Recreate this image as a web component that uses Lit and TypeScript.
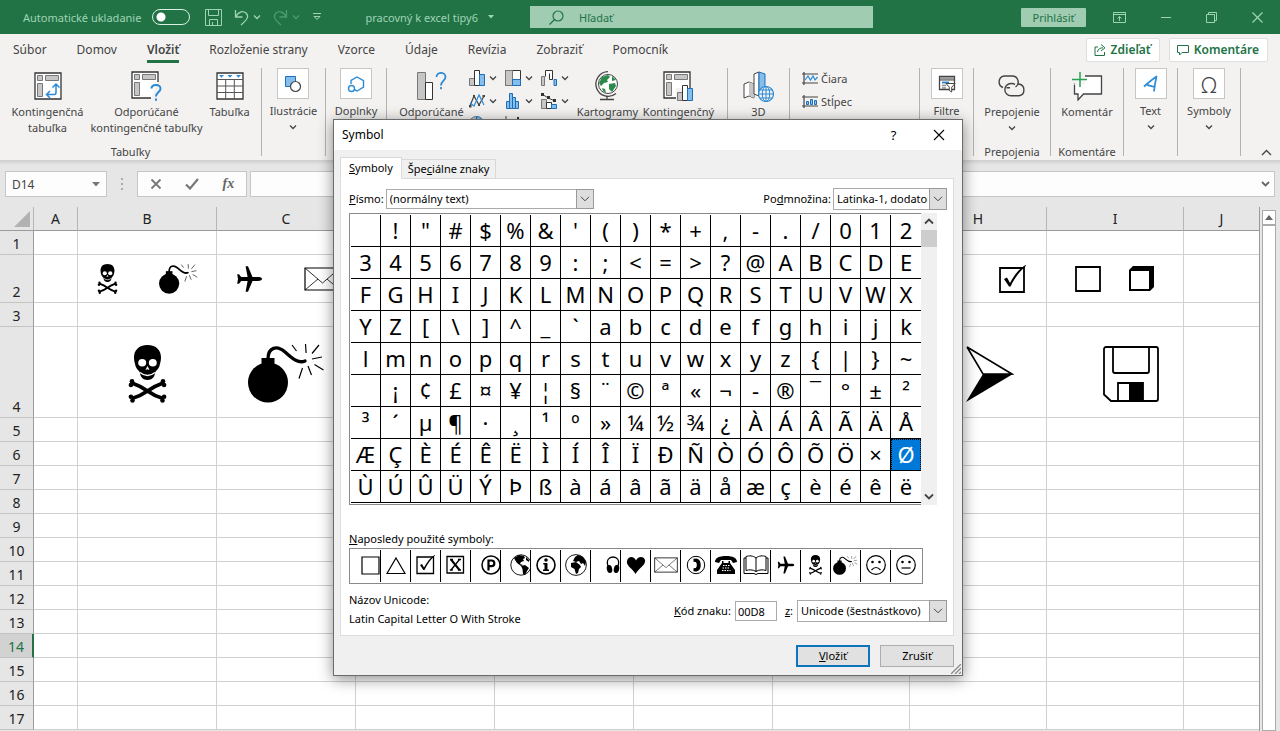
import { LitElement, html, svg, css, nothing } from "lit";
import { customElement, state } from "lit/decorators.js";
import { classMap } from "lit/directives/class-map.js";

const pic = (w: number, h: number, body: unknown, box = `0 0 ${w} ${h}`) =>
  html`<svg width=${w} height=${h} viewBox=${box} fill="none" aria-hidden="true">${body}</svg>`;

/* ---------- pictographs shared by the sheet and the dialog ---------- */

const skull = svg`
  <path fill="#000" d="M19 0C28 0 32.5 5.5 32.5 12.5C32.5 16 31.5 18.5 31 21C30 24 28 25.5 26.8 27L25.8 31C24 34 21.5 35 19 35S14 34 12.2 31L11.2 27C10 25.5 8 24 7 21C6.500 18.500 5.500 16 5.500 12.500C5.500 5.500 10 0 19 0Z"/>
  <ellipse cx="13.700" cy="17.800" rx="4" ry="3.800" fill="#fff"/><ellipse cx="24.300" cy="17.800" rx="4" ry="3.800" fill="#fff"/>
  <path fill="#fff" d="M19 21l2 4-2-.8-2 .8z"/>
  <path stroke="#fff" stroke-width="1.300" d="M11.500 27.500Q19 33.500 26.500 27.500"/>
  <g stroke="#000" stroke-width="3.800"><path d="M3.500 38Q12 41 19 46T34.500 53.500M34.500 38Q26 41 19 46T3.500 53.500"/></g>
  <g fill="#000"><circle cx="3.500" cy="36.200" r="2.300"/><circle cx="2.400" cy="40" r="2.300"/><circle cx="34.500" cy="36.200" r="2.300"/><circle cx="35.600" cy="40" r="2.300"/>
  <circle cx="2.400" cy="51.800" r="2.300"/><circle cx="4" cy="55.500" r="2.300"/><circle cx="35.600" cy="51.800" r="2.300"/><circle cx="34" cy="55.500" r="2.300"/></g>`;

const bomb = svg`
  <circle cx="20" cy="38.500" r="20" fill="#000"/><path fill="#000" d="M13.500 14h13v8h-13z"/>
  <path stroke="#000" stroke-width="3.400" stroke-linecap="round" d="M20 15C20 3 29 1 37 8C44 14 50 20 57 17"/>
  <path stroke="#000" stroke-width="1.200" d="M44 1l4.500 6M57.500 0l.6 9M71 1l-7 8.500M74 13l-10 2M75.500 26l-9-5.500M63.500 31l-3.500-9M51 34.500l3.500-10.500"/>`;

const plane = svg`<path fill="#000" d="M26 13c0 1.300-2 1.900-4 1.900h-5.500l-4.500 10.800H9.600l2-10.800H5.200L3 17.800H1.200L2 13 1.200 8.200H3l2.200 2.900h6.400l-2-10.800H12l4.500 10.800H22c2 0 4 .600 4 1.900z"/>`;
const mail = svg`<path stroke="#000" stroke-width="1.200" d="M1 1h35v22H1z"/><path stroke="#000" stroke-width=".8" d="M1 1l17.500 15L36 1M1 23l13-11M36 23L23 12"/>`;
const tickBox = svg`<path stroke="#000" stroke-width="1.800" d="M1 3h24v24H1z"/><path fill="#000" d="M5 14l3-1.500 3 5.500C15 10 20 4 26.500 0l.5.800C20 7 15 14 11.600 21.500H10z"/>`;
const openBox = svg`<path stroke="#000" stroke-width="1.800" d="M1 1h24v24H1z"/>`;
const cube = svg`<path fill="#000" d="M0 4L4 0h21v21l-4 4H0z"/><path fill="#fff" d="M2 5h18v18H2z"/>`;
const arrowHead = svg`<path stroke="#000" stroke-width="1.600" d="M1 1l45 27L17 28z"/><path fill="#000" d="M17 28h30L0 56z"/>`;
const floppy = svg`<path stroke="#000" stroke-width="1.800" d="M3 1h50a2 2 0 0 1 2 2v50a2 2 0 0 1-2 2H8L1 48.500V3a2 2 0 0 1 2-2z"/><path stroke="#000" stroke-width="1.800" d="M10 1v24a2 2 0 0 0 2 2h32a2 2 0 0 0 2-2V1M15 55V37h25v18"/><path fill="#000" d="M26 37h14v18H26z"/>`;

const face = (mouth: string) => svg`<circle cx="11" cy="11" r="9.300" stroke="#000" stroke-width="1.200"/><circle cx="7.500" cy="8" r="1.300" fill="#000"/><circle cx="14.500" cy="8" r="1.300" fill="#000"/><path stroke="#000" stroke-width="1.200" d=${mouth}/>`;

const recent = [
  { name: "White Square", at: "end", art: pic(19, 19, svg`<path stroke="#000" stroke-width="1.200" d="M1 1h17v17H1z"/>`) },
  { name: "Triangle", at: "", art: pic(20, 20, svg`<path stroke="#000" stroke-width="1.200" d="M10 3l9 15.500H1z"/>`) },
  { name: "Checked Box", at: "", art: pic(19, 20, svg`<path stroke="#000" stroke-width="1.300" d="M1 2h16.500v16.500H1z"/><path fill="#000" d="M4 10l2-1 2 3.500C11 7 14 3 18.500 0l.5.600C14 5 11 10 8.500 15H7.300z"/>`) },
  { name: "X Box", at: "", art: pic(19, 20, svg`<path stroke="#000" stroke-width="1.300" d="M1 1.500h16.500V18H1z"/><path stroke="#000" stroke-width="2" d="M5 4.500l8.500 10.500"/><path stroke="#000" stroke-width="1.300" d="M13.500 4.500L5 15M3.800 15h3M12 15h3M4 4.500h3M12 4.500h3"/>`) },
  { name: "Sound Recording Copyright", at: "end", art: pic(19, 20, svg`<circle cx="10" cy="10" r="9" stroke="#000" stroke-width="1.500"/><path stroke="#000" stroke-width="2.200" d="M7.500 15.500V5.500h3a2.800 2.800 0 0 1 0 5.700h-3"/>`) },
  { name: "Globe Americas", at: "end", art: pic(20, 22, svg`<circle cx="11" cy="11" r="10.200" stroke="#000" stroke-width=".9"/><path fill="#000" d="M4 4l5-3 5 1 1 2-2 1 1 2-3 1-1 2 3 1-2 1-4-3-2-3zM11 12l4-1 4 3-2 3-2 4-2-1-.5-5zM16 3l3 3v2l-3-2z"/>`) },
  { name: "Circled Information", at: "", art: pic(20, 20, svg`<circle cx="10" cy="10" r="9" stroke="#000" stroke-width="1.600"/><circle cx="10" cy="5" r="1.800" fill="#000"/><path stroke="#000" stroke-width="3" d="M10 8.300V15"/><path stroke="#000" stroke-width="1.400" d="M7.300 8.700H11M7 15.300h6"/>`) },
  { name: "Globe Africa", at: "", art: pic(24, 22, svg`<circle cx="12" cy="11" r="10.400" stroke="#000" stroke-width=".9"/><path fill="#000" d="M11 3l3-2 5 2 3 5-1 4-2-3-2 1-2-3-3 1-3-1zM7 9l5-1 4 3 1 2-2 2-1 4-2 1-1.500-5-3.500-2z"/>`) },
  { name: "Headphones", at: "end", art: pic(15, 18, svg`<path stroke="#000" stroke-width="1.300" d="M3 10C1 4 4 1 8 1s7 3 5 9"/><ellipse cx="4.500" cy="13" rx="2.700" ry="4" fill="#000" transform="rotate(-12 4.500 13)"/><ellipse cx="11.500" cy="13" rx="2.700" ry="4" fill="#000" transform="rotate(12 11.500 13)"/>`) },
  { name: "Heart", at: "", art: pic(20, 18, svg`<path fill="#000" d="M9.500 18C6 12 0 10 1 5 2-.500 8.500 0 10 4.500 12 0 18 0 19 4c1 5-6 8-9.500 14z"/>`) },
  { name: "Envelope", at: "", art: pic(24, 18, mail, "0 0 37 24") },
  { name: "Telephone Location", at: "", art: pic(20, 20, svg`<circle cx="10" cy="10" r="8.700" stroke="#000"/><path fill="#000" d="M7.500 3.800l3-.3c3.500 1 4.200 3.500 4.200 6.500s-.7 5.500-4.200 6.500l-3-.3v-3l2.300-.2c1.400-1.500 1.400-4.500 0-6l-2.300-.2z"/>`) },
  { name: "Black Telephone", at: "", art: pic(22, 18, svg`<path fill="#000" d="M0 6C0 2 4 0 11 0s11 2 11 6l-4 1-2-3H6L4 7zM7 5h1.500v2h5V5H15v2l5 7v4H2v-4l5-7z"/><path stroke="#fff" stroke-width="1" stroke-dasharray="1.500 1" d="M8 9.500h6.500M7.500 12h7.500M7 14.500h8.500"/>`) },
  { name: "Open Book", at: "", art: pic(26, 20, svg`<path stroke="#000" d="M13 3C10 .500 6 .500 3 1.500v14c3-1 7-1 10 1 3-2 7-2 10-1v-14c-3-1-7-1-10 1.500zM13 3v14M3 3H1v15.500h10l2 1 2-1h10V3h-2"/>`) },
  { name: "Airplane", at: "", art: pic(18, 18, plane, "0 0 27 26") },
  { name: "Skull and Crossbones", at: "", art: pic(13, 20, skull, "0 0 38 58") },
  { name: "Bomb", at: "", art: pic(25, 19, bomb, "0 0 77 59") },
  { name: "Frowning Face", at: "", art: pic(22, 22, face("M6.500 16q4.500-5 9 0")) },
  { name: "Neutral Face", at: "", art: pic(22, 22, face("M6.500 14h9")) },
];

const chevron = (color = "#444") => pic(8, 6, svg`<path stroke=${color} stroke-width="1.300" d="M1 1.500l3 3 3-3"/>`);

/* ---------- worksheet ---------- */

const columns = ["A", "B", "C", "D", "E", "F", "G", "H", "I", "J"];
/* the open dialog lies over these headers */
const covered = new Set(["D", "E", "F", "G"]);
const tall: Record<number, string> = { 2: "medium", 4: "large" };
const cells: Record<string, { kind: string; items: unknown[] }> = {
  B2: { kind: "pair", items: [pic(21, 30, skull, "0 0 38 58"), pic(39, 30, bomb, "0 0 77 59")] },
  C2: { kind: "pair", items: [pic(27, 26, plane), pic(37, 24, mail)] },
  H2: { kind: "right", items: [pic(27, 28, tickBox)] },
  I2: { kind: "boxes", items: [pic(26, 26, openBox), pic(25, 25, cube)] },
  B4: { kind: "middle", items: [pic(39, 58, skull, "0 0 38 58")] },
  C4: { kind: "middle", items: [pic(77, 59, bomb)] },
  H4: { kind: "arrow", items: [pic(48, 56, arrowHead)] },
  I4: { kind: "far", items: [pic(56, 56, floppy)] },
};

@customElement("work-sheet")
class WorkSheet extends LitElement {
  static styles = css`
    :host { display: flex; flex: 1; min-height: 0; overflow: hidden; background: #e6e6e6; }
    .sheet { flex: 1; min-width: 0; border-collapse: separate; border-spacing: 0; table-layout: fixed; width: 100%; font-size: 14px; color: #222; }
    .holder { flex: 1; min-width: 0; border-right: 1px solid #9b9b9b; }
    .c-num { width: 34px; } .c-a { width: 44px; } .c-w { width: 139px; } .c-h { width: 137px; }
    th, td { padding: 0; font-weight: 400; box-sizing: border-box; line-height: 20px; }
    thead th { height: 24px; background: #e6e6e6; border-right: 1px solid #b5b5b5; border-bottom: 1px solid #9b9b9b; }
    thead th:last-child { border-right: 0; }
    tbody th { height: 24px; background: #e6e6e6; border-right: 1px solid #9b9b9b; border-bottom: 1px solid #c3c3c3; vertical-align: bottom; }
    .medium th { height: 48px; } .large th { height: 91px; }
    td { background: #fff; border-right: 1px solid #d0d0d0; border-bottom: 1px solid #d0d0d0; }
    td:last-child { border-right: 0; }
    tbody .here { background: #d2d2d2; color: #217346; border-right: 2px solid #217346; }
    .corner svg { display: block; margin: 0 3px 0 auto; }
    .cell { display: flex; align-items: center; }
    .cell svg { flex: none; }
    .pair { padding-left: 19px; gap: 41px; }
    .boxes { padding-left: 28px; gap: 28px; }
    .middle { justify-content: center; padding-top: 3px; }
    .right { justify-content: flex-end; padding-right: 20px; }
    .far, .arrow { justify-content: flex-end; padding: 3px 24px 0 0; }
    .arrow { padding-right: 32px; }
    .bar { width: 14px; margin: 3px 4px 0 2px; display: flex; flex-direction: column; }
    .up { height: 16px; padding: 0; border: 1px solid #ababab; border-bottom-width: 2px; background: #fff; display: grid; place-items: center; }
    .track { flex: 1; background: #fff; border: 1px solid #ababab; border-top: 0; }
  `;
  render() {
    return html`
      <div class="holder"><table class="sheet">
        <colgroup><col class="c-num"><col class="c-a"><col class="c-w"><col class="c-w"><col class="c-w"><col class="c-w"><col class="c-w"><col class="c-h"><col class="c-h"><col class="c-h"><col></colgroup>
        <thead><tr><th class="corner">${pic(16, 16, svg`<path fill="#b2b2b2" d="M16 0v16H0z"/>`)}</th>${columns.map((c) => html`<th scope="col">${covered.has(c) ? nothing : c}</th>`)}</tr></thead>
        <tbody>${Array.from({ length: 17 }, (_, i) => i + 1).map((n) => html`
          <tr class=${tall[n] ?? ""}><th scope="row" class=${n === 14 ? "here" : ""}>${n}</th>${columns.map((c) => {
            const cell = cells[c + n];
            return html`<td>${cell ? html`<div class="cell ${cell.kind}">${cell.items}</div>` : nothing}</td>`;
          })}</tr>`)}</tbody>
      </table></div>
      <div class="bar"><button class="up" aria-label="Posunúť nahor">${pic(8, 5, svg`<path fill="#666" d="M4 0l4 5H0z"/>`)}</button><div class="track"></div></div>`;
  }
}

/* ---------- symbol dialog ---------- */

const codes = [...Array.from({ length: 95 }, (_, i) => 0x20 + i), ...Array.from({ length: 76 }, (_, i) => 0xa0 + i)];
const arrowDown = pic(10, 6, svg`<path stroke="#444" d="M1 .800l4 4 4-4"/>`);

@customElement("symbol-dialog")
class SymbolDialog extends LitElement {
  @state() selected = 0xd8;
  static styles = css`
    :host { display: block; box-sizing: border-box; width: 630px; background: #f0f0f0; border: 1px solid #6b6b6b; box-shadow: 0 3px 14px rgba(0, 0, 0, 0.45); font-size: 11px; line-height: 16px; color: #000; }
    * { box-sizing: border-box; }
    button, input, select { font: inherit; color: inherit; }
    .title { display: flex; align-items: center; height: 30px; padding: 0 1px 0 8px; background: #fff; font-size: 12px; }
    .title h1 { flex: 1; margin: 0; font: inherit; }
    .title button { width: 45px; height: 28px; padding: 0; border: 0; background: none; display: grid; place-items: center; font-size: 13px; }
    .body { padding: 7px 8px 8px 6px; }
    .tabs { display: flex; align-items: flex-end; position: relative; margin-bottom: -1px; }
    .tabs button { height: 20px; padding: 0 6px; border: 1px solid #d9d9d9; border-left: 0; background: #f0f0f0; }
    .tabs .on { height: 22px; padding: 0 8px; background: #fff; border-left: 1px solid #d9d9d9; border-bottom-color: #fff; }
    .panel { background: #fff; border: 1px solid #dcdcdc; padding: 9px 6px 5px 8px; }
    .row { display: flex; align-items: center; }
    .font-row { height: 22px; margin-bottom: 3px; gap: 2px; }
    .grow { flex: 1; }
    .drop { position: relative; display: flex; height: 22px; }
    .drop select { appearance: none; width: 100%; border: 1px solid #ababab; border-radius: 0; background: #fff; padding: 0 18px 0 3px; outline: 0; }
    .drop span { position: absolute; right: 0; top: 0; bottom: 0; width: 18px; display: grid; place-items: center; background: #dedede; border: 1px solid #9a9a9a; pointer-events: none; }
    .font { width: 208px; height: 20px; } .subset { width: 114px; } .from { width: 150px; }
    .chart { display: flex; }
    .glyphs { display: grid; grid-template-columns: repeat(19, 30px); grid-auto-rows: 32px; padding: 1px 0 1px 1px; border: 1px solid #8a8a8a; border-right: 0; }
    .glyphs button, .recent button { padding: 0; border: 0; border-right: 1px solid #000; background: none; display: grid; place-items: center; overflow: hidden; }
    .glyphs button { border-bottom: 1px solid #000; font-size: 22px; line-height: 28px; padding-bottom: 2px; }
    .glyphs button:nth-child(19n) { border-right: 0; }
    .glyphs .sel { background: #0078d7; color: #fff; outline: 1px dotted #000; outline-offset: -1px; }
    .bar { width: 16px; background: #f0f0f0; display: flex; flex-direction: column; align-items: center; justify-content: space-between; padding: 5px 0; }
    .upper { display: flex; flex-direction: column; align-items: center; gap: 5px; align-self: stretch; }
    .thumb { height: 17px; align-self: stretch; background: #cdcdcd; }
    .caption { margin-top: 26px; }
    .recent { display: inline-grid; grid-template-columns: repeat(19, 30px); height: 36px; margin-top: 1px; padding: 1px; border: 1px solid #8a8a8a; vertical-align: top; }
    .recent button { padding-bottom: 2px; }
    .recent .end { justify-items: end; }
    .recent button:last-child { border-right: 0; }
    .info { display: flex; justify-content: space-between; margin-top: 8px; }
    .info p { margin: 0 0 3px; }
    .code { gap: 4px; align-self: center; height: 22px; }
    .code input { width: 42px; height: 20px; border: 1px solid #ababab; padding: 0 2px; outline: 0; margin-right: 4px; }
    .foot { display: flex; justify-content: flex-end; gap: 10px; margin-top: 9px; }
    .foot button { width: 74px; height: 22px; padding: 0; border: 1px solid #adadad; background: #e1e1e1; }
    .foot .ok { border: 2px solid #0f74c0; }
    .grip { position: absolute; right: 1px; bottom: 1px; display: block; }
    .grip svg { display: block; }
  `;
  drop(id: string, cls: string, text: string) {
    return html`<div class="drop ${cls}"><select id=${id}><option>${text}</option></select><span>${arrowDown}</span></div>`;
  }
  render() {
    return html`
      <div class="title"><h1>Symbol</h1>
        <button aria-label="Pomocník">?</button>
        <button aria-label="Zavrieť">${pic(12, 12, svg`<path stroke="#000" stroke-width="1.100" d="M1 1l10 10M11 1L1 11"/>`)}</button></div>
      <div class="body">
        <div class="tabs" role="tablist"><button role="tab" aria-selected="true" class="on"><u>S</u>ymboly</button><button role="tab" aria-selected="false">Špe<u>c</u>iálne znaky</button></div>
        <div class="panel">
          <div class="row font-row"><label for="font"><u>P</u>ísmo:</label>${this.drop("font", "font", "(normálny text)")}<span class="grow"></span><label for="subset">Po<u>d</u>množina:</label>${this.drop("subset", "subset", "Latinka-1, dodatok")}</div>
          <div class="chart">
            <div class="glyphs">${codes.map((c) => html`<button class=${classMap({ sel: c === this.selected })} @click=${() => (this.selected = c)}>${c === 0xad ? "-" : String.fromCharCode(c)}</button>`)}</div>
            <div class="bar"><div class="upper">${pic(10, 7, svg`<path stroke="#444" stroke-width="1.800" d="M1 5.500l4-4 4 4"/>`)}<div class="thumb"></div></div>${pic(10, 7, svg`<path stroke="#444" stroke-width="1.800" d="M1 1.500l4 4 4-4"/>`)}</div>
          </div>
          <div class="caption"><u>N</u>aposledy použité symboly:</div>
          <div class="recent">${recent.map((r) => html`<button class=${r.at} aria-label=${r.name}>${r.art}</button>`)}</div>
          <div class="info">
            <div><p>Názov Unicode:</p><p>Latin Capital Letter O With Stroke</p></div>
            <div class="row code"><label for="code"><u>K</u>ód znaku:</label><input id="code" value="00D8"><label for="from"><u>z</u>:</label>${this.drop("from", "from", "Unicode (šestnástkovo)")}</div>
          </div>
        </div>
        <div class="foot"><button class="ok"><u>V</u>ložiť</button><button>Zrušiť</button></div>
      </div>
      <span class="grip">${pic(10, 10, svg`<path stroke="#8a8a8a" stroke-width="1.300" d="M0 10L10 0M4 10l6-6M8 10l2-2"/>`)}</span>`;
  }
}

/* ---------- ribbon artwork ---------- */

const frame = svg`<path fill="#fff" stroke="#333" stroke-width="1.300" d="M1 1h26v26H1z"/><path fill="#c6c6c6" stroke="#777" d="M3.500 3.500h5v5h-5zM11.500 3.500h13v5h-13zM3.500 11.500h5v13h-5z"/>`;
const art = {
  pivot: pic(28, 28, svg`${frame}<path stroke="#2b8ad6" stroke-width="1.500" d="M22 12v8.500a2 2 0 0 1-2 2h-7M18.500 15.500L22 12l3.500 3.500M16 19l-3.500 3.500L16 26"/>`),
  pivotAsk: pic(31, 30, svg`<path fill="#fff" stroke="#333" stroke-width="1.300" d="M27 11V1H1v26h19"/><path fill="#c6c6c6" stroke="#777" d="M3.500 3.500h5v5h-5zM11.500 3.500h13v5h-13zM3.500 11.500h5v13h-5z"/><path stroke="#2b8ad6" stroke-width="2" d="M20.500 17.500c0-4.500 9-5 9 0 0 4-4.500 3.500-4.500 8M25 27.500v2.300"/>`),
  table: pic(28, 28, svg`<path fill="#fff" stroke="#333" stroke-width="1.300" d="M1 1h26v26H1z"/><path stroke="#555" d="M1 7.500h26M1 14h26M1 20.500h26M9.700 7v20M18.300 7v20"/><path fill="#2b8ad6" d="M3 3h5l-2.500 2.800zM11.500 3h5L14 5.800zM20 3h5l-2.500 2.800z"/>`),
  shapes: pic(18, 18, svg`<path fill="#83beec" stroke="#1f6fb8" d="M1.500 1.500h10v10h-10z"/><circle cx="11.500" cy="11.500" r="5" fill="#fff" stroke="#444" stroke-width="1.200"/>`),
  addins: pic(18, 18, svg`<path stroke="#2b8ad6" stroke-width="1.400" d="M4 9V5.500L10 2l6.500 3.700v6.500L10 16l-3-1.500"/><circle cx="4.500" cy="13.500" r="3" stroke="#2b8ad6" stroke-width="1.400"/>`),
  chartAsk: pic(31, 28, svg`<path fill="#c6c6c6" stroke="#777" d="M1.500.500h8v27h-8z"/><path fill="#fff" stroke="#333" d="M9.500 10.500h7v17h-7z"/><path stroke="#2b8ad6" stroke-width="1.800" d="M20.500 5c0-5.500 9-5.500 9 0 0 4-4.500 4-4.500 8.500M25 15v2.200"/>`),
  globe: pic(28, 30, svg`<circle cx="14" cy="13" r="9.500" fill="#fff" stroke="#444"/><path fill="#2a8a4a" d="M8 6l6-2 2 2-3 3 1 2-4 1-3 3-2-3zM15 13l6-1 1 3-4 6-3-3zM18 5l4 4-4 1zM8 17l3 1 1 4-3-2z"/><path stroke="#444" stroke-width="1.300" d="M14 .700A12.300 12.300 0 1 0 22 22.500M13 25.500V28M6 28.500h14"/>`),
  pivotChart: pic(31, 31, svg`${frame}<path fill="#f3f2f1" d="M13 17h18v14H13z"/><path fill="#c6c6c6" stroke="#777" d="M14.500 21.500h5v8h-5z"/><path fill="#fff" stroke="#333" d="M19.500 14.500h5v15h-5z"/><path fill="#83beec" stroke="#1f6fb8" d="M24.500 17.500h5v12h-5z"/>`),
  map3d: pic(31, 31, svg`<path fill="#fff" stroke="#444" d="M1 13l5-2 5 2v14l-5-2-5 2z"/><path fill="#c6c6c6" d="M6 11l5 2v14l-5-2z"/><path fill="#fff" stroke="#444" d="M11 3l5-2v24l-5-2z"/><path fill="#83beec" stroke="#1f6fb8" d="M16 1l6 2v20l-6 2z"/><circle cx="23" cy="23" r="7.500" fill="#f3f2f1" stroke="#2b8ad6" stroke-width="1.200"/><path stroke="#2b8ad6" d="M15.500 23h15M17 19h12M17 27h12M23 15.500v15"/><ellipse cx="23" cy="23" rx="3.700" ry="7.500" stroke="#2b8ad6"/>`),
  filter: pic(18, 18, svg`<path fill="#fff" stroke="#444" stroke-width="1.300" d="M1.500 1.500h15v13h-15z"/><path fill="#9a9a9a" d="M2 2h14v2.500H2z"/><path stroke="#444" d="M2 5h14"/><path stroke="#1f7fd0" stroke-width="1.800" d="M4 7.500h7"/><path stroke="#888" stroke-width="1.500" d="M4 10.500h4M4 13h4"/><path fill="#fff" stroke="#444" d="M8 8.500h9l-3.300 3.700V17l-2.400-1.500v-3.300z"/>`),
  link: pic(29, 22, svg`<g stroke="#444" stroke-width="1.400"><path d="M6 12.500A6 6 0 0 1 7 1h8a6 6 0 0 1 3.500 11"/><path d="M18 9.500A5 5 0 0 0 15 8.500h-1a6 6 0 0 0 0 12.300h8A6 6 0 0 0 22 9h-1.500M9.500 12.800H13"/></g>`),
  comment: pic(31, 29, svg`<path fill="#fff" stroke="#444" stroke-width="1.300" d="M13 4h16.500v18H11.500L6 28v-6H2.500V11"/><path fill="#f3f2f1" d="M0 2h13v11H0z" opacity=".6"/><path stroke="#2aa053" stroke-width="1.500" d="M8 0v15M0 7.500h15"/>`),
  letter: pic(16, 18, svg`<path stroke="#2b8ad6" stroke-width="1.700" stroke-linejoin="round" d="M1 11.500C5 8 9 4.500 13.500 1.500 12.500 6 11.500 11 11 16.500M3 9c3 2.500 6 2 9.500 3"/>`),
  column: pic(16, 16, svg`<path fill="#c6c6c6" stroke="#777" d="M.500 8.500h5v7h-5z"/><path fill="#fff" stroke="#333" d="M5.500.500h5v15h-5z"/><path fill="#83beec" stroke="#1f6fb8" d="M10.500 4.500h5v11h-5z"/>`),
  tree: pic(16, 16, svg`<path fill="#fff" stroke="#333" d="M.500.500h15v15H.500z"/><path fill="#c6c6c6" stroke="#777" d="M.500.500h7v15h-7z"/><path fill="#83beec" stroke="#1f6fb8" d="M7.500 9.500h8v6h-8z"/>`),
  falls: pic(16, 16, svg`<path fill="#c6c6c6" stroke="#777" d="M.500 15.500v-9h3v9z"/><path fill="#fff" stroke="#333" d="M4.500 6.500v-6h7v9h-3v-6"/><path fill="#83beec" stroke="#1f6fb8" d="M13 9.500h2.500v6H13z"/>`),
  line: pic(16, 16, svg`<path stroke="#444" stroke-width="1.200" d="M1 13L5 3l5 9 5-9"/><path stroke="#2b8ad6" stroke-width="1.200" d="M1 10l4 3 5-11 5 10"/><path fill="#444" d="M0 12h2.500v2.500H0zM4 2h2v2H4zM9 11h2v2H9zM13.500 2H16v2h-2.500z"/>`),
  bars: pic(16, 16, svg`<path fill="#83beec" stroke="#1f6fb8" d="M1.500 8.500h3v7h-3zM4.500.500h3v15h-3zM7.500 4.500h3v11h-3zM10.500 8.500h3v7h-3z"/>`),
  combo: pic(16, 16, svg`<path fill="#c6c6c6" stroke="#777" d="M.500 6.500h5v9h-5z"/><path fill="#fff" stroke="#333" d="M5.500 9.500h5v6h-5z"/><path fill="#83beec" stroke="#1f6fb8" d="M10.500 11.500h5v4h-5z"/><path stroke="#444" d="M1 1l6 4 7 3"/><path fill="#333" d="M0 0h3v3H0zM6 3h3v3H6zM12 6h3v3h-3z"/>`),
  pie: pic(16, 16, svg`<path fill="#c6c6c6" stroke="#777" d="M7.500.500a7 7 0 1 0 0 15z"/><path fill="#83beec" stroke="#1f6fb8" d="M7.500.500a7 7 0 0 1 0 15z"/>`),
  scatter: pic(16, 16, svg`<path stroke="#444" d="M1 0v15h15"/><path fill="#333" d="M12 1h2v2h-2zM6 5h2v2H6z"/>`),
  sparkLine: pic(17, 16, svg`<path stroke="#444" stroke-width="1.200" d="M2 1v13M0 3h16M0 12h16"/><path stroke="#2b8ad6" stroke-width="1.200" d="M3 9l3-4 2.500 4L11 5l2 4 2.500-3"/>`),
  sparkCol: pic(17, 16, svg`<path stroke="#444" stroke-width="1.200" d="M2 1v13M0 3h16M0 12h16"/><path fill="#83beec" stroke="#1f6fb8" d="M4.500 7.500h2v3h-2zM8.500 5.500h2v5h-2zM12.500 6.500h2v4h-2z"/>`),
};

const share = pic(12, 12, svg`<path stroke="#217346" d="M4 3H1v8.500h9.500V8M3.500 8C4 5 6 3.800 9 3.800M7 .500l4 3.300L7 7"/>`);
const talk = pic(12, 12, svg`<path stroke="#217346" d="M.500 1.500h11v7H5L2.500 11V8.500h-2z"/>`);

const tabNames = ["Súbor", "Domov", "Vložiť", "Rozloženie strany", "Vzorce", "Údaje", "Revízia", "Zobraziť", "Pomocník"];

@customElement("app-root")
class AppRoot extends LitElement {
  static styles = css`
    :host { display: flex; flex-direction: column; height: 100vh; min-width: 1000px; position: relative; overflow: hidden; font-family: "Noto Sans", "Open Sans", sans-serif; color: #444; background: #e6e6e6; }
    * { box-sizing: border-box; }
    button, input { font: inherit; color: inherit; border: 0; padding: 0; background: none; }
    svg { display: block; flex: none; }
    .top { flex: none; display: flex; align-items: center; height: 34px; background: #217346; color: #9fd3b5; font-size: 11px; padding-right: 17px; }
    .quick { flex: none; width: 530px; display: flex; align-items: center; padding-left: 23px; }
    .toggle { appearance: none; margin: 0 15px 0 11px; width: 38px; height: 16px; border: 1px solid #d9f0e2; border-radius: 8px; background: radial-gradient(circle at 8px 7px, #fff 4px, transparent 5px); }
    .undo { display: flex; align-items: center; gap: 4px; margin-left: 12px; }
    .more { margin-left: 13px; }
    .file { display: flex; align-items: center; gap: 10px; margin-left: 44px; }
    .find { flex: 0 1 343px; display: flex; align-items: center; height: 22px; background: #a0ccb2; padding-left: 19px; gap: 15px; color: #217346; }
    .find input { flex: 1; min-width: 0; outline: 0; }
    .find input::placeholder { color: #217346; opacity: 1; }
    .win { margin-left: auto; display: flex; align-items: center; gap: 35px; }
    .sign { height: 19px; width: 65px; background: #a0ccb2; color: #217346; border-radius: 1px; margin-right: -8px; }
    .tabs { flex: none; display: flex; align-items: center; height: 31px; padding: 0 12px 0 13px; background: #f3f2f1; font-size: 12px; gap: 30px; }
    .tabs .tab { height: 27px; padding-top: 2px; border-bottom: 3px solid transparent; white-space: nowrap; }
    .tabs .on { font-weight: 600; border-color: #217346; }
    .acts { margin-left: auto; display: flex; gap: 9px; color: #217346; font-weight: 600; }
    .acts button { height: 24px; display: flex; align-items: center; gap: 5px; padding: 0 8px 0 7px; background: #fff; border: 1px solid #e1dfdd; border-radius: 2px; }
    .ribbon { flex: none; display: flex; height: 95px; padding: 3px 6px 4px 0; background: #f3f2f1; font-size: 11px; line-height: 16px; white-space: nowrap; }
    .group { flex: none; display: flex; flex-direction: column; border-right: 1px solid #b5b3b1; text-align: center; }
    .tools { flex: 1; display: flex; justify-content: center; }
    .caption { height: 14px; line-height: 14px; margin-bottom: -3px; }
    .big { display: flex; flex-direction: column; align-items: center; gap: 5px; overflow: visible; }
    .big .pict { height: 31px; display: flex; align-items: center; padding-top: 5px; }
    .big .text { display: flex; flex-direction: column; align-items: center; }
    .big .text svg { margin-top: 5px; }
    .boxed { gap: 4px; }
    .boxed .pict { width: 32px; justify-content: center; padding: 0; background: #fff; border: 1px solid #c8c6c4; }
    .omega { font-size: 22px; font-weight: 300; }
    .g1 { width: 262px; } .g2 { width: 64px; } .g3 { width: 61px; } .g4 { width: 341px; } .g5 { width: 62px; } .g6 { width: 130px; }
    .g7 { width: 54px; } .g8 { width: 77px; } .g9 { width: 73px; } .g10 { width: 54px; } .g11 { width: 63px; }
    .w48 { width: 48px; } .w62 { width: 62px; } .w72 { width: 72px; } .w80 { width: 80px; } .w118 { width: 118px; }
    .charts { display: grid; grid-template-columns: repeat(3, 36px); grid-auto-rows: 16px; row-gap: 7px; padding: 2px 0 0 1px; height: 50px; }
    .charts button { display: flex; align-items: center; gap: 4px; }
    .sparks { flex: 1; display: flex; flex-direction: column; gap: 7px; padding: 3px 0 0 12px; }
    .sparks button { display: flex; align-items: center; gap: 2px; height: 16px; }
    .fold { margin: auto 0 0 auto; padding: 0 2px 0 0; }
    .formula { flex: none; display: flex; align-items: center; height: 47px; padding: 1px 5px 0; background: linear-gradient(#cfcfcf, #e6e6e6 5px); font-size: 12px; }
    .formula > * { height: 26px; background: #fdfdfd; border: 1px solid #c6c6c6; }
    .name { width: 102px; display: flex; align-items: center; padding: 0 6px; }
    .name input { flex: 1; min-width: 0; outline: 0; }
    .formula .dots { width: 30px; border: 0; background: none; display: grid; place-items: center; }
    .fx { width: 110px; display: flex; align-items: center; justify-content: space-around; }
    .fx .fn { font: italic 700 14px "Liberation Serif", serif; color: #666; }
    .entry { flex: 1; min-width: 0; margin-left: 3px; display: flex; align-items: center; padding-right: 4px; }
    .entry input { flex: 1; min-width: 0; outline: 0; }
    symbol-dialog { position: absolute; top: 119px; left: calc(50% - 307px); }
  `;

  big(pict: unknown, lines: string[], cls = "", drop = false) {
    return html`<button class="big ${cls}"><span class="pict">${pict}</span><span class="text">${lines.map((l) => html`<span>${l}</span>`)}${drop ? chevron() : nothing}</span></button>`;
  }
  group(cls: string, body: unknown, caption = "") {
    return html`<div class="group ${cls}"><div class="tools">${body}</div>${caption ? html`<div class="caption">${caption}</div>` : nothing}</div>`;
  }

  render() {
    const pale = "#9fd3b5";
    const dim = "#4f9a70";
    return html`
      <header class="top">
        <div class="quick">
          <label for="auto">Automatické ukladanie</label><input id="auto" class="toggle" type="checkbox">
          <button aria-label="Uložiť">${pic(17, 17, svg`<path stroke=${pale} d="M.500.500h16v16H.500zM3.500.500v6h10v-6M4.500 16.500v-6h8v6M7.500 13v3"/>`)}</button>
          <div class="undo"><button aria-label="Späť">${pic(15, 17, svg`<path stroke=${pale} stroke-width="1.300" d="M1.500 1v7h7M1.500 8C5 2 9 1.500 12 4c3 3 2 6-5 12"/>`)}</button>${chevron(pale)}</div>
          <div class="undo"><button aria-label="Znova">${pic(15, 17, svg`<path stroke=${dim} stroke-width="1.300" d="M13.500 1v7h-7M13.500 8C10 2 6 1.500 3 4c-3 3-2 6 5 12"/>`)}</button>${chevron(dim)}</div>
          <button class="more" aria-label="Prispôsobiť">${pic(8, 8, svg`<path stroke=${pale} d="M0 .500h8M1 3.500l3 3 3-3z"/>`)}</button>
          <div class="file">pracovný k excel tipy6 ${pic(6, 4, svg`<path fill=${pale} d="M0 0h6L3 3.500z"/>`)}</div>
        </div>
        <div class="find">${pic(15, 15, svg`<circle cx="9" cy="6" r="5" stroke="#217346" stroke-width="1.200"/><path stroke="#217346" stroke-width="1.200" d="M5.500 9.500L.500 14.500"/>`)}<input aria-label="Hľadať" placeholder="Hľadať"></div>
        <div class="win">
          <button class="sign">Prihlásiť</button>
          <button aria-label="Možnosti pása s nástrojmi">${pic(13, 11, svg`<path stroke=${pale} d="M.500.500h12v10H.500zM.500 2.500h12M6.500 9V4.500M4.500 6.500l2-2 2 2"/>`)}</button>
          <button aria-label="Minimalizovať">${pic(10, 10, svg`<path stroke=${pale} d="M0 5.500h10"/>`)}</button>
          <button aria-label="Obnoviť">${pic(11, 11, svg`<path stroke=${pale} d="M.500 2.500h8v8h-8zM2.500 2.500v-2h8v8h-2"/>`)}</button>
          <button aria-label="Zavrieť">${pic(11, 11, svg`<path stroke=${pale} stroke-width="1.200" d="M.500.500l10 10M10.500.500l-10 10"/>`)}</button>
        </div>
      </header>
      <nav class="tabs">
        ${tabNames.map((t) => html`<button class="tab ${t === "Vložiť" ? "on" : ""}">${t}</button>`)}
        <div class="acts"><button>${share}Zdieľať</button><button>${talk}Komentáre</button></div>
      </nav>
      <div class="ribbon">
        ${this.group("g1", [
          this.big(art.pivot, ["Kontingenčná", "tabuľka"], "w80"),
          this.big(art.pivotAsk, ["Odporúčané", "kontingenčné tabuľky"], "w118"),
          this.big(art.table, ["Tabuľka"], "w48"),
        ], "Tabuľky")}
        ${this.group("g2", this.big(art.shapes, ["Ilustrácie"], "boxed", true))}
        ${this.group("g3", this.big(art.addins, ["Doplnky"], "boxed", true))}
        ${this.group("g4", [
          this.big(art.chartAsk, ["Odporúčané"], "w72"),
          html`<div class="charts">${[art.column, art.tree, art.falls, art.line, art.bars, art.combo].map((a) => html`<button>${a}${chevron()}</button>`)}<button>${art.pie}</button><button>${art.scatter}</button></div>`,
          this.big(art.globe, ["Kartogramy"], "w62"),
          this.big(art.pivotChart, ["Kontingenčný"], "w80"),
        ])}
        ${this.group("g5", this.big(art.map3d, ["3D"]))}
        ${this.group("g6", html`<div class="sparks"><button>${art.sparkLine}Čiara</button><button>${art.sparkCol}Stĺpec</button></div>`)}
        ${this.group("g7", this.big(art.filter, ["Filtre"], "boxed", true))}
        ${this.group("g8", this.big(art.link, ["Prepojenie"], "", true), "Prepojenia")}
        ${this.group("g9", this.big(art.comment, ["Komentár"]), "Komentáre")}
        ${this.group("g10", this.big(art.letter, ["Text"], "boxed", true))}
        ${this.group("g11", this.big(html`<span class="omega">Ω</span>`, ["Symboly"], "boxed", true))}
        <button class="fold" aria-label="Zbaliť pás s nástrojmi">${pic(11, 7, svg`<path stroke="#444" stroke-width="1.300" d="M1 6l4.500-4.500L10 6"/>`)}</button>
      </div>
      <div class="formula">
        <div class="name"><input aria-label="Pole názvov" value="D14">${pic(8, 5, svg`<path fill="#777" d="M0 0h8L4 4.500z"/>`)}</div>
        <div class="dots">${pic(2, 12, svg`<path fill="#aaa" d="M0 0h2v2H0zM0 5h2v2H0zM0 10h2v2H0z"/>`)}</div>
        <div class="fx">
          <button aria-label="Zrušiť">${pic(12, 12, svg`<path stroke="#777" stroke-width="1.800" d="M1.500 1.500l9 9M10.500 1.500l-9 9"/>`)}</button>
          <button aria-label="Zadať">${pic(14, 12, svg`<path stroke="#777" stroke-width="2.200" d="M1 6.500l4 4L13 1"/>`)}</button>
          <button class="fn" aria-label="Vložiť funkciu">fx</button>
        </div>
        <div class="entry"><input aria-label="Riadok vzorcov">${pic(9, 6, svg`<path stroke="#666" stroke-width="1.800" d="M1 1l3.500 3.500L8 1"/>`)}</div>
      </div>
      <work-sheet></work-sheet>
      <symbol-dialog role="dialog" aria-label="Symbol"></symbol-dialog>`;
  }
}
